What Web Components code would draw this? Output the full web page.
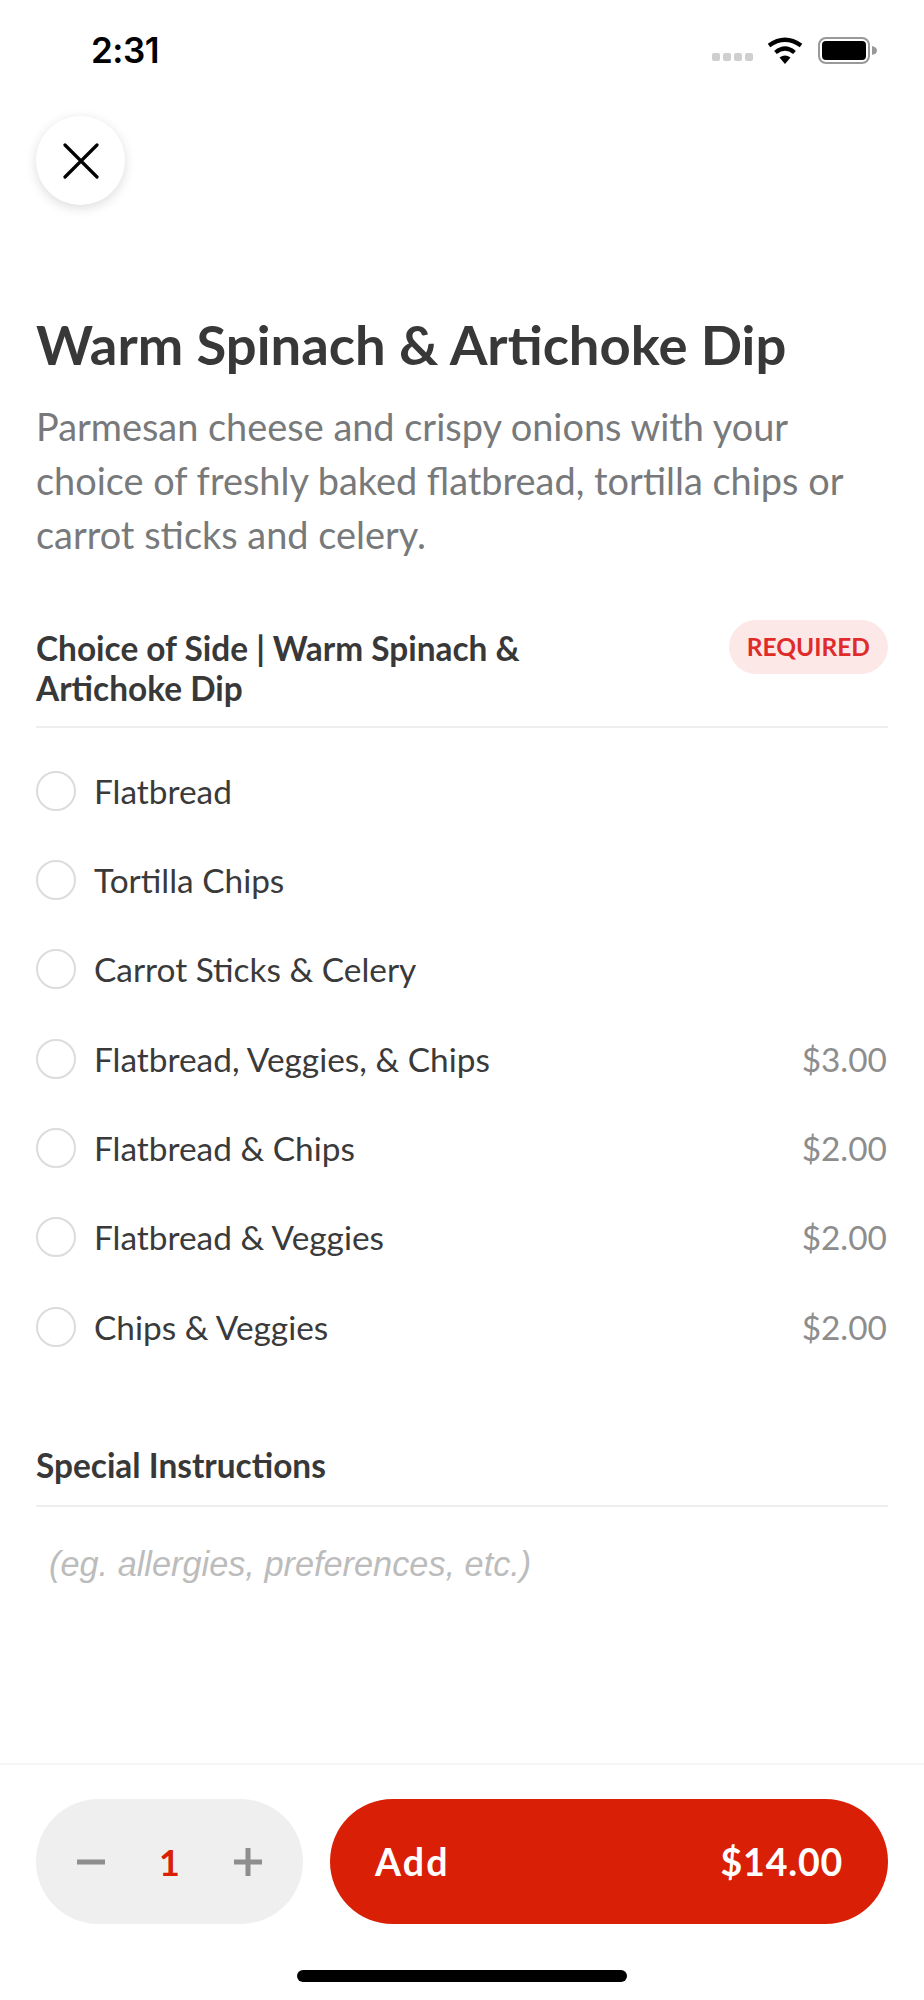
<!DOCTYPE html>
<html>
<head>
<meta charset="utf-8">
<title>Warm Spinach & Artichoke Dip</title>
<style>
    html, body { margin: 0; padding: 0; background: #fff; }
    body { font-family: Lato, "Liberation Sans", sans-serif; }
</style>
</head>
<body>
<item-page>
    <status-bar slot="status" time="2:31"></status-bar>
    <close-button slot="close"></close-button>
    <item-intro slot="intro" heading="Warm Spinach &amp; Artichoke Dip">
        Parmesan cheese and crispy onions with your choice of freshly baked flatbread, tortilla chips or carrot sticks and celery.
    </item-intro>
    <option-group slot="options" heading="Choice of Side | Warm Spinach &amp; Artichoke Dip" required>
        <option-row label="Flatbread"></option-row>
        <option-row label="Tortilla Chips"></option-row>
        <option-row label="Carrot Sticks &amp; Celery"></option-row>
        <option-row label="Flatbread, Veggies, &amp; Chips" price="$3.00"></option-row>
        <option-row label="Flatbread &amp; Chips" price="$2.00"></option-row>
        <option-row label="Flatbread &amp; Veggies" price="$2.00"></option-row>
        <option-row label="Chips &amp; Veggies" price="$2.00"></option-row>
    </option-group>
    <special-instructions slot="notes" placeholder="(eg. allergies, preferences, etc.)"></special-instructions>
    <order-bar slot="footer" quantity="1" total="$14.00"></order-bar>
</item-page>

<script>
class ItemPage extends HTMLElement {
    constructor() {
        super();
        this.attachShadow({ mode: 'open' });
        this.shadowRoot.innerHTML = `
            <style>
                :host { display: flex; flex-direction: column; width: 924px; height: 2000px; background: #fff; overflow: hidden; }
                .spacer { flex: 1; }
            </style>
            <slot name="status"></slot>
            <slot name="close"></slot>
            <slot name="intro"></slot>
            <slot name="options"></slot>
            <slot name="notes"></slot>
            <div class="spacer"></div>
            <slot name="footer"></slot>
        `;
    }
}

class StatusBar extends HTMLElement {
    constructor() {
        super();
        this.attachShadow({ mode: 'open' });
        this.shadowRoot.innerHTML = `
            <style>
                :host { display: flex; align-items: center; justify-content: space-between; height: 100px; padding: 0 47px 0 91px; box-sizing: border-box; }
                .time { font: 600 35px Inter, "Liberation Sans", sans-serif; color: #000; letter-spacing: -0.5px; }
                .icons { display: flex; align-items: center; }
                svg { display: block; }
            </style>
            <span class="time">${this.getAttribute('time')}</span>
            <div class="icons">
                <svg width="41" height="8" viewBox="0 0 41 8" style="margin:13px 14px 0 0">
                    <rect x="0" y="0" width="8" height="8" rx="2" fill="#cfcfcf"/>
                    <rect x="11" y="0" width="8" height="8" rx="2" fill="#cfcfcf"/>
                    <rect x="22" y="0" width="8" height="8" rx="2" fill="#cfcfcf"/>
                    <rect x="33" y="0" width="8" height="8" rx="2" fill="#cfcfcf"/>
                </svg>
                <svg width="36" height="27" viewBox="0 0 36 27" style="margin-right:15px">
                    <path d="M18 27 L12.5 20.5 Q18 16.5 23.5 20.5 Z" fill="#000"/>
                    <path d="M8.500 15.500 Q18 7.500 27.500 15.500" fill="none" stroke="#000" stroke-width="4.200"/>
                    <path d="M2 8.500 Q18 -3 34 8.500" fill="none" stroke="#000" stroke-width="4.200"/>
                </svg>
                <svg width="59" height="27" viewBox="0 0 59 27">
                    <rect x="1" y="1" width="50" height="25" rx="7" fill="#fff" stroke="#999" stroke-width="2"/>
                    <rect x="4" y="4" width="44" height="19" rx="4" fill="#000"/>
                    <path d="M54 9 Q59 10 59 13.500 Q59 17 54 18 Z" fill="#999"/>
                </svg>
            </div>
        `;
    }
}

class CloseButton extends HTMLElement {
    constructor() {
        super();
        this.attachShadow({ mode: 'open' });
        this.shadowRoot.innerHTML = `
            <style>
                :host { display: flex; align-items: center; justify-content: center; width: 89px; height: 89px; margin: 16px 0 0 36px; border-radius: 50%; background: #fff; box-shadow: 0 3px 12px rgba(0,0,0,.14); }
            </style>
            <svg width="36" height="36" viewBox="0 0 36 36">
                <path d="M2 2 L34 34 M34 2 L2 34" stroke="#000" stroke-width="3.200" stroke-linecap="round" fill="none"/>
            </svg>
        `;
    }
}

class ItemIntro extends HTMLElement {
    constructor() {
        super();
        this.attachShadow({ mode: 'open' });
        this.shadowRoot.innerHTML = `
            <style>
                :host { display: block; padding: 0 36px; margin-top: 106px; }
                h1 { margin: 0; font: 700 54.400px/66px Lato, sans-serif; color: #383838; }
                p { margin: 23px 0 0; width: 830px; font: 400 37.900px/54px Lato, sans-serif; color: #77797b; }
            </style>
            <h1>${this.getAttribute('heading').replace('&', '&amp;')}</h1>
            <p><slot></slot></p>
        `;
    }
}

class OptionGroup extends HTMLElement {
    constructor() {
        super();
        this.attachShadow({ mode: 'open' });
        const pill = this.hasAttribute('required') ? '<span class="pill">REQUIRED</span>' : '';
        this.shadowRoot.innerHTML = `
            <style>
                :host { display: block; padding: 0 36px; margin-top: 56px; }
                header { display: flex; justify-content: space-between; align-items: flex-start; border-bottom: 2px solid #eeeeee; padding-bottom: 18px; }
                h2 { margin: 10px 0 0; width: 540px; font: 700 33.400px/40px Lato, sans-serif; color: #383838; }
                .pill { margin-top: 2px; background: #fde8e8; color: #e02b2b; font: 700 24.500px/54px Lato, sans-serif; height: 54px; padding: 0 18px; border-radius: 27px; }
                .rows { padding-top: 18px; }
            </style>
            <header>
                <h2>${this.getAttribute('heading').replace('&', '&amp;')}</h2>
                ${pill}
            </header>
            <div class="rows"><slot></slot></div>
        `;
    }
}

class OptionRow extends HTMLElement {
    constructor() {
        super();
        this.attachShadow({ mode: 'open' });
        const price = this.getAttribute('price');
        this.shadowRoot.innerHTML = `
            <style>
                :host { display: flex; align-items: center; height: 89.330px; }
                .radio { width: 40px; height: 40px; box-sizing: border-box; border: 2px solid #dcdcdc; border-radius: 50%; margin-right: 18px; }
                .label { flex: 1; font: 400 33.400px Lato, sans-serif; color: #3a3a3a; }
                .price { font: 400 33.400px Lato, sans-serif; color: #8d8d8d; margin-right: 1px; }
            </style>
            <span class="radio"></span>
            <span class="label">${this.getAttribute('label').replace('&', '&amp;')}</span>
            ${price ? `<span class="price">${price}</span>` : ''}
        `;
    }
}

class SpecialInstructions extends HTMLElement {
    constructor() {
        super();
        this.attachShadow({ mode: 'open' });
        this.shadowRoot.innerHTML = `
            <style>
                :host { display: block; padding: 0 36px; margin-top: 74px; }
                h2 { margin: 0; font: 700 33.400px/40px Lato, sans-serif; color: #383838; padding-bottom: 20px; border-bottom: 2px solid #eeeeee; }
                .hint { padding: 37px 0 0 13px; font: italic 400 34.300px/40px "Liberation Sans", sans-serif; color: #bcbcbc; }
            </style>
            <h2>Special Instructions</h2>
            <div class="hint">${this.getAttribute('placeholder')}</div>
        `;
    }
}

class OrderBar extends HTMLElement {
    constructor() {
        super();
        this.attachShadow({ mode: 'open' });
        this.shadowRoot.innerHTML = `
            <style>
                :host { display: block; border-top: 2px solid #f6f6f6; padding: 34px 36px 0; height: 237px; box-sizing: border-box; }
                .row { display: flex; gap: 27px; height: 125px; }
                .stepper { display: flex; align-items: center; justify-content: space-between; width: 267px; padding: 0 41px; box-sizing: border-box; background: #efefef; border-radius: 62.500px; }
                .qty { font: 700 36px Lato, sans-serif; color: #d91f06; }
                .add { flex: 1; display: flex; align-items: center; justify-content: space-between; padding: 0 45px; background: #d91f06; color: #fff; border-radius: 62.500px; font: 700 37.500px Lato, sans-serif; }
                .add .label { letter-spacing: 2.200px; }
                .add .total { letter-spacing: 0.800px; }
                .home { width: 330px; height: 12px; background: #000; border-radius: 6px; margin: 46px auto 0; }
                svg { display: block; }
            </style>
            <div class="row">
                <div class="stepper">
                    <svg width="28" height="28" viewBox="0 0 28 28"><rect x="0" y="11.500" width="28" height="5" fill="#8e8e8e"/></svg>
                    <span class="qty">${this.getAttribute('quantity')}</span>
                    <svg width="28" height="28" viewBox="0 0 28 28"><path d="M11.500 0h5v11.500H28v5H16.500V28h-5V16.500H0v-5h11.500z" fill="#8e8e8e"/></svg>
                </div>
                <div class="add"><span class="label">Add</span><span class="total">${this.getAttribute('total')}</span></div>
            </div>
            <div class="home"></div>
        `;
    }
}

customElements.define('item-page', ItemPage);
customElements.define('status-bar', StatusBar);
customElements.define('close-button', CloseButton);
customElements.define('item-intro', ItemIntro);
customElements.define('option-group', OptionGroup);
customElements.define('option-row', OptionRow);
customElements.define('special-instructions', SpecialInstructions);
customElements.define('order-bar', OrderBar);
</script>
</body>
</html>
